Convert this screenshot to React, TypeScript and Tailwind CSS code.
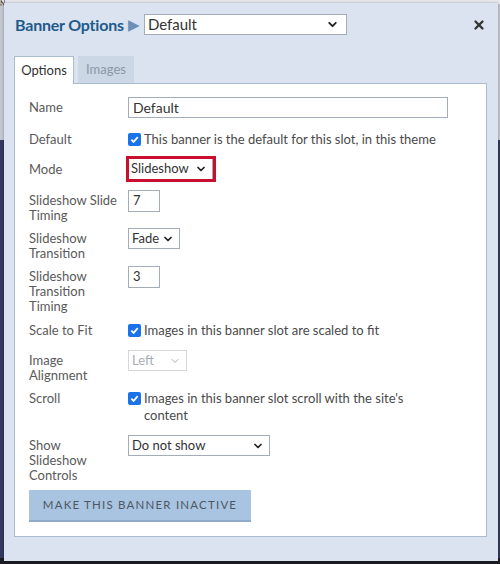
import { ChevronDown, X } from 'lucide-react';

const FONT = { fontFamily: 'Lato, "Open Sans", sans-serif' };

function FakeSelect({ value, width, disabled = false }: { value: string; width: string; disabled?: boolean }) {
  return (
    <div
      className={`${width} h-[21px] flex items-center justify-between pl-[3px] pr-[5px] bg-white border ${
        disabled ? 'border-[#d6d9dc] text-[#a9adb2]' : 'border-[#a3adb8] text-[#333]'
      } text-[13px]`}
    >
      <span>{value}</span>
      <ChevronDown size={12} strokeWidth={disabled ? 2 : 3.5} className={disabled ? 'text-[#a9adb2]' : 'text-[#222]'} />
    </div>
  );
}

function TextBox({ value, width }: { value: string; width: string }) {
  return (
    <div className={`${width} h-[22px] flex items-center px-[4px] bg-white border border-[#a3adb8] text-[13px] text-[#333]`}>
      {value}
    </div>
  );
}

function Check({ children }: { children: React.ReactNode }) {
  return (
    <div className="flex items-start gap-[3px] w-[310px] text-[13px] leading-[17px] text-[#4a4a4a]">
      <span className="mt-[2px] w-[13px] h-[13px] shrink-0 rounded-[2px] bg-[#1a73e8] flex items-center justify-center">
        <svg width="9" height="9" viewBox="0 0 10 10">
          <path d="M1.5 5.2 L4 7.6 L8.6 2.4" fill="none" stroke="white" strokeWidth="2" />
        </svg>
      </span>
      <span>{children}</span>
    </div>
  );
}

function Row({ label, pt = 'pt-[3px]', mt, children }: { label: React.ReactNode; pt?: string; mt: string; children: React.ReactNode }) {
  return (
    <div className={`flex items-start ${mt}`}>
      <div className={`w-[99px] shrink-0 pr-2 text-[13px] leading-[15px] text-[#5a5a5a] ${pt}`}>{label}</div>
      {children}
    </div>
  );
}

export default function App() {
  return (
    <div className="relative w-[500px] h-[564px] overflow-hidden bg-[#343a5e]" style={FONT}>
      {/* page behind the dialog */}
      <div className="absolute left-0 top-0 w-full h-[140px] bg-[#c4c9d1]" />
      <div className="absolute left-0 top-0 w-full h-[4px] bg-[#e8eaee]" />
      <div className="absolute left-0 bottom-0 w-full h-[6px] bg-[#1c1c22]" />
      <span className="absolute left-0 top-0 text-[7px] leading-[7px] text-[#333]">N</span>

      <div className="relative ml-[4px] mt-[3px] w-[494px] h-[558px] bg-[#dae3ef] shadow-[0_0_3px_rgba(0,0,0,0.3)] pl-[10px] pr-[11px] pt-[11px]">
        <div className="flex items-center h-[21px]">
          <span className="ml-[1px] text-[16px] font-bold text-[#1f5a8b] tracking-[-0.2px]">Banner Options</span>
          <span className="ml-[4px] text-[15px] leading-none text-[#6b90b8]">▶</span>
          <div className="ml-[4px] w-[203px] h-[21px] flex items-center justify-between pl-[3px] pr-[7px] bg-white border border-[#a3adb8] text-[15px] text-[#333]">
            <span>Default</span>
            <ChevronDown size={13} strokeWidth={3.5} className="text-[#222]" />
          </div>
          <div className="ml-auto mr-[1px] text-[#333]">
            <X size={14} strokeWidth={4} />
          </div>
        </div>

        <div className="mt-[21px] flex items-end gap-[4px]">
          <div className="w-[60px] h-[28px] -mb-px bg-white border border-b-0 border-[#a9bcd0] flex items-center justify-center text-[13px] text-[#333] relative">
            Options
          </div>
          <div className="w-[56px] h-[27px] bg-[#ccd7e5] flex items-center justify-center text-[13px] text-[#8b97a5]">
            Images
          </div>
        </div>

        <div className="w-[473px] bg-white border border-[#a9bcd0] pl-[14px] pt-[13px] pb-[14px]">
          <Row label="Name" mt="mt-0">
            <div className="w-[320px] h-[21px] flex items-center px-[4px] bg-white border border-[#a3adb8] text-[14px] text-[#333]">
              Default
            </div>
          </Row>

          <Row label="Default" pt="pt-[1px]" mt="mt-[13px]">
            <Check>This banner is the default for this slot, in this theme</Check>
          </Row>

          <Row label="Mode" pt="pt-[6px]" mt="mt-[8px]">
            <div className="-ml-[2px] border-[3px] border-[#c8102e]">
              <div className="w-[84px] h-[20px] flex items-center justify-between pl-[2px] pr-[5px] bg-white border-r border-[#a3adb8] text-[13px] text-[#333]">
                <span>Slideshow</span>
                <ChevronDown size={12} strokeWidth={3.5} className="text-[#222]" />
              </div>
            </div>
          </Row>

          <Row label={<>Slideshow Slide<br />Timing</>} mt="mt-[8px]">
            <TextBox value="7" width="w-[32px]" />
          </Row>

          <Row label={<>Slideshow<br />Transition</>} mt="mt-[5px]">
            <FakeSelect value="Fade" width="w-[52px]" />
          </Row>

          <Row label={<>Slideshow<br />Transition<br />Timing</>} mt="mt-[5px]">
            <TextBox value="3" width="w-[32px]" />
          </Row>

          <Row label="Scale to Fit" pt="pt-[1px]" mt="mt-[8px]">
            <Check>Images in this banner slot are scaled to fit</Check>
          </Row>

          <Row label={<>Image<br />Alignment</>} mt="mt-[11px]">
            <FakeSelect value="Left" width="w-[59px]" disabled />
          </Row>

          <Row label="Scroll" pt="pt-[1px]" mt="mt-[7px]">
            <Check>Images in this banner slot scroll with the site's content</Check>
          </Row>

          <Row label={<>Show<br />Slideshow<br />Controls</>} mt="mt-[11px]">
            <FakeSelect value="Do not show" width="w-[142px]" />
          </Row>

          <button className="mt-[7px] w-[222px] h-[32px] bg-[#a8c4e1] border-b-2 border-[#8fabc9] text-[11.5px] tracking-[1.2px] text-[#4d5763]">
            MAKE THIS BANNER INACTIVE
          </button>
        </div>
      </div>
    </div>
  );
}
